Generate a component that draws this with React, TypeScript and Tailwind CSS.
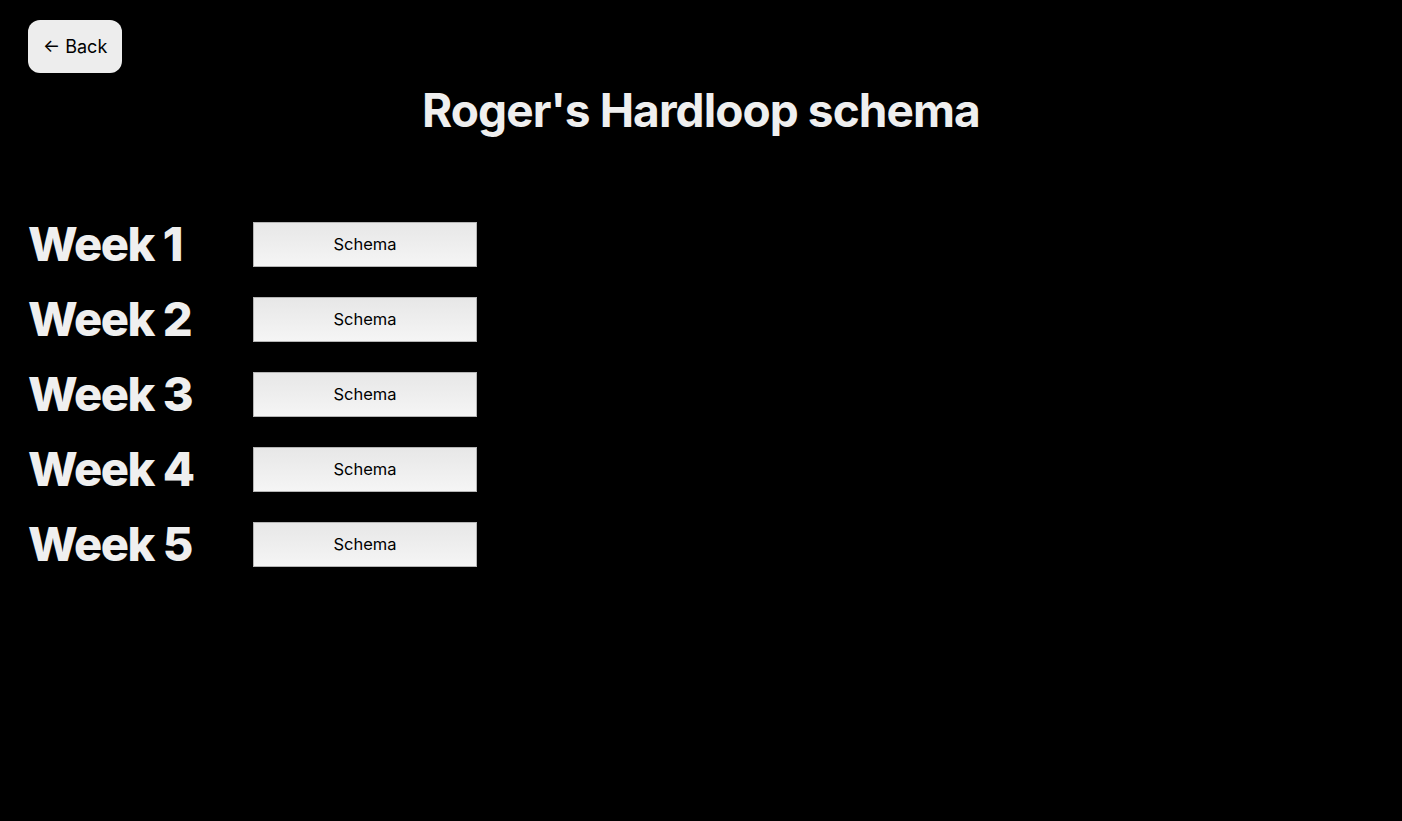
import React from 'react';

const weeks = [1, 2, 3, 4, 5];

export default function App() {
    return (
        <div
            className="min-h-screen bg-black text-[#efefef] px-7 pt-5"
            style={{ fontFamily: 'Inter, "Noto Sans", sans-serif' }}
        >
            <button className="h-[53px] px-[15px] rounded-xl bg-[#ededed] text-black text-[18px] leading-none">
                ← Back
            </button>

            <h1 className="mt-[14px] text-center text-[46px] font-bold leading-none tracking-[-0.02em]">
                Roger's Hardloop schema
            </h1>

            <div className="mt-[87px] flex flex-col gap-[27px]">
                {weeks.map((w) => (
                    <div key={w} className="flex items-center">
                        <h2 className="w-[225px] text-[48px] leading-[48px] font-extrabold tracking-[-0.03em]">
                            <span className="text-[47px]">Week {w}</span>
                        </h2>
                        <button className="w-[224px] h-[45px] border border-[#b5b5b5] bg-gradient-to-b from-[#e7e7e7] to-[#f5f5f5] text-black text-[16.5px]">
                            Schema
                        </button>
                    </div>
                ))}
            </div>
        </div>
    );
}
